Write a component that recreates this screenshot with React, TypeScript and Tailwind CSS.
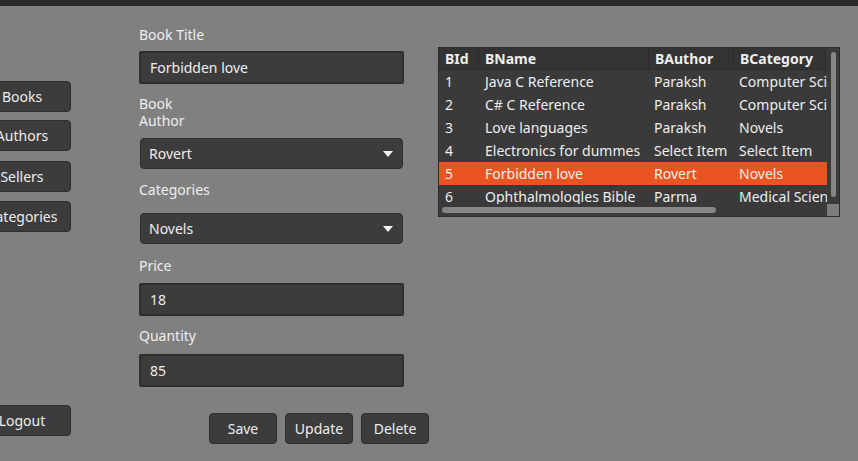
const books = [
  { id: 1, name: "Java C Reference", author: "Paraksh", category: "Computer Science" },
  { id: 2, name: "C# C Reference", author: "Paraksh", category: "Computer Science" },
  { id: 3, name: "Love languages", author: "Paraksh", category: "Novels" },
  { id: 4, name: "Electronics for dummes", author: "Select Item", category: "Select Item" },
  { id: 5, name: "Forbidden love", author: "Rovert", category: "Novels" },
  { id: 6, name: "Ophthalmologles Bible", author: "Parma", category: "Medical Science" },
];

const navItems = ["Books", "Authors", "Sellers", "Categories"];

const Caret = () => (
  <svg width="10" height="6" viewBox="0 0 10 6" className="shrink-0">
    <path d="M0 0h10L5 6z" fill="#f2f2f2" />
  </svg>
);

const NavButton = ({ label, className = "" }: { label: string; className?: string }) => (
  <button
    className={`w-[98px] h-[31px] -ml-[27px] rounded-[4px] border border-[#2e2e2e] bg-[#3c3c3c] text-[#eeeeee] text-[14px] ${className}`}
  >
    {label}
  </button>
);

const TextField = ({ value }: { value: string }) => (
  <div className="w-[265px] h-[33px] border-2 border-[#2e2e2e] bg-[#3c3c3c] rounded-[2px] flex items-center px-[9px] text-[14px] text-[#eeeeee]">
    {value}
  </div>
);

const SelectField = ({ value }: { value: string }) => (
  <div className="ml-[1px] w-[263px] h-[31px] border border-[#2e2e2e] bg-[#3c3c3c] rounded-[4px] flex items-center justify-between pl-[8px] pr-[9px] text-[14px] text-[#eeeeee]">
    <span>{value}</span>
    <Caret />
  </div>
);

const ActionButton = ({ label }: { label: string }) => (
  <button className="w-[68px] h-[31px] rounded-[4px] border border-[#2e2e2e] bg-[#3c3c3c] text-[#eeeeee] text-[14px]">
    {label}
  </button>
);

const App = () => {
  return (
    <div
      className="w-[858px] h-[461px] bg-[#808080] overflow-hidden"
      style={{ fontFamily: '"Noto Sans", "Open Sans", sans-serif' }}
    >
      <div className="h-[6px] bg-[#2b2b2b]" />

      <div className="flex">
        {/* left nav */}
        <div className="w-[139px] flex flex-col pt-[75px]">
          <NavButton label={navItems[0]} />
          <NavButton label={navItems[1]} className="mt-[8px]" />
          <NavButton label={navItems[2]} className="mt-[10px]" />
          <NavButton label={navItems[3]} className="mt-[9px]" />
          <NavButton label="Logout" className="mt-[173px]" />
        </div>

        {/* form */}
        <div className="w-[299px] flex flex-col text-[14px] text-[#eeeeee]">
          <div className="mt-[19px] leading-[20px]">Book Title</div>
          <div className="mt-[6px]">
            <TextField value="Forbidden love" />
          </div>
          <div className="mt-[11px] leading-[17px]">
            Book
            <br />
            Author
          </div>
          <div className="mt-[9px]">
            <SelectField value="Rovert" />
          </div>
          <div className="mt-[11px] leading-[20px]">Categories</div>
          <div className="mt-[13px]">
            <SelectField value="Novels" />
          </div>
          <div className="mt-[12px] leading-[20px]">Price</div>
          <div className="mt-[7px]">
            <TextField value="18" />
          </div>
          <div className="mt-[10px] leading-[20px]">Quantity</div>
          <div className="mt-[8px]">
            <TextField value="85" />
          </div>
          <div className="mt-[26px] ml-[70px] flex gap-[8px]">
            <ActionButton label="Save" />
            <ActionButton label="Update" />
            <ActionButton label="Delete" />
          </div>
        </div>

        {/* table */}
        <div className="mt-[41px] w-[402px] h-[170px] border border-[#2b2b2b] bg-[#3a3a3a] flex text-[14px] text-[#eeeeee]">
          <div className="w-[388px] flex flex-col">
            <div className="h-[22px] bg-[#333333] border-b border-[#2b2b2b] grid grid-cols-[40px_170px_85px_93px] font-bold whitespace-nowrap">
              <div className="px-[6px] border-r border-[#2b2b2b] leading-[22px]">BId</div>
              <div className="px-[6px] border-r border-[#2b2b2b] leading-[22px]">BName</div>
              <div className="px-[6px] border-r border-[#2b2b2b] leading-[22px]">BAuthor</div>
              <div className="px-[6px] leading-[22px] overflow-hidden">BCategory</div>
            </div>
            <div className="h-[134px] overflow-hidden">
              {books.map((b) => (
                <div
                  key={b.id}
                  className={`h-[23px] grid grid-cols-[40px_170px_85px_93px] whitespace-nowrap leading-[23px] ${
                    b.id === 5 ? "bg-[#e95420]" : ""
                  }`}
                >
                  <div className="px-[6px]">{b.id}</div>
                  <div className="px-[6px] overflow-hidden">{b.name}</div>
                  <div className="pl-[5px] overflow-hidden">{b.author}</div>
                  <div className="pl-[5px] overflow-hidden">{b.category}</div>
                </div>
              ))}
            </div>
            <div className="h-[12px] flex items-center px-[3px]">
              <div className="w-[274px] h-[6px] rounded-full bg-[#868686]" />
            </div>
          </div>
          <div className="w-[12px] flex flex-col">
            <div className="flex-1 flex justify-center pt-[4px]">
              <div className="w-[5px] h-[145px] rounded-full bg-[#868686]" />
            </div>
            <div className="h-[12px] bg-[#7b7b7b]" />
          </div>
        </div>
      </div>
    </div>
  );
};

export default App;
